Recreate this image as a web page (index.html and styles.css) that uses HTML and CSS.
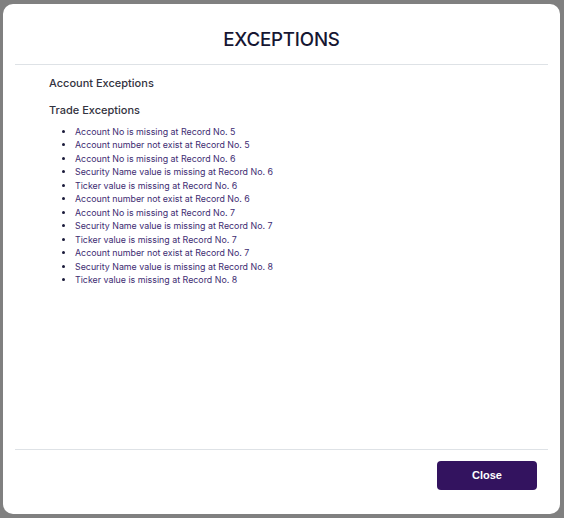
FILE: index.html
```html
<!DOCTYPE html>
<html>
<head>
<meta charset="utf-8">
<link rel="stylesheet" href="styles.css">
</head>
<body>
<div class="backdrop">
  <div class="modal">
    <div class="modal-header">
      <h1 class="modal-title">EXCEPTIONS</h1>
    </div>
    <div class="modal-body">
      <h2 class="section-title">Account Exceptions</h2>
      <h2 class="section-title trade">Trade Exceptions</h2>
      <ul class="exc-list">
        <li>Account No is missing at Record No. 5</li>
        <li>Account number not exist at Record No. 5</li>
        <li>Account No is missing at Record No. 6</li>
        <li>Security Name value is missing at Record No. 6</li>
        <li>Ticker value is missing at Record No. 6</li>
        <li>Account number not exist at Record No. 6</li>
        <li>Account No is missing at Record No. 7</li>
        <li>Security Name value is missing at Record No. 7</li>
        <li>Ticker value is missing at Record No. 7</li>
        <li>Account number not exist at Record No. 7</li>
        <li>Security Name value is missing at Record No. 8</li>
        <li>Ticker value is missing at Record No. 8</li>
      </ul>
    </div>
    <div class="modal-footer">
      <button class="btn-close">Close</button>
    </div>
  </div>
</div>
</body>
</html>
```
FILE: styles.css
```css
html, body {
  margin: 0;
  padding: 0;
  height: 100%;
}
body {
  background: #808080;
  font-family: Inter, "Noto Sans", sans-serif;
}
.backdrop {
  height: 100%;
  box-sizing: border-box;
  padding: 4px 4px 4px 3px;
  display: flex;
}
.modal {
  flex: 1;
  background: #ffffff;
  border-radius: 10px;
  display: flex;
  flex-direction: column;
  padding: 0 12px;
}
.modal-header {
  height: 61px;
  border-bottom: 1px solid #dee2e6;
  display: flex;
  align-items: center;
  justify-content: center;
  box-sizing: border-box;
}
.modal-title {
  margin: 0;
  padding-top: 10px;
  font-size: 18.7px;
  font-weight: 500;
  color: #161632;
  letter-spacing: -0.2px;
}
.modal-body {
  flex: 1;
  padding: 11px 34px 0;
}
.section-title {
  margin: 0;
  font-size: 11px;
  font-weight: 500;
  color: #333340;
  line-height: 14px;
}
.section-title.trade {
  margin-top: 13px;
}
.exc-list {
  margin: 8px 0 0;
  padding-left: 26px;
  font-size: 8.85px;
  line-height: 13.45px;
  color: #3d2c72;
}
.exc-list li::marker {
  color: #1a1a3a;
}
.modal-footer {
  height: 65px;
  border-top: 1px solid #dee2e6;
  display: flex;
  justify-content: flex-end;
  align-items: flex-start;
  padding: 11px 11px 0 0;
  box-sizing: border-box;
}
.btn-close {
  width: 100px;
  height: 29px;
  background: #33135f;
  color: #ffffff;
  border: none;
  border-radius: 4px;
  font-family: "Liberation Sans", Arial, sans-serif;
  font-weight: 700;
  font-size: 11px;
  padding: 0 0 2px;
}
```
